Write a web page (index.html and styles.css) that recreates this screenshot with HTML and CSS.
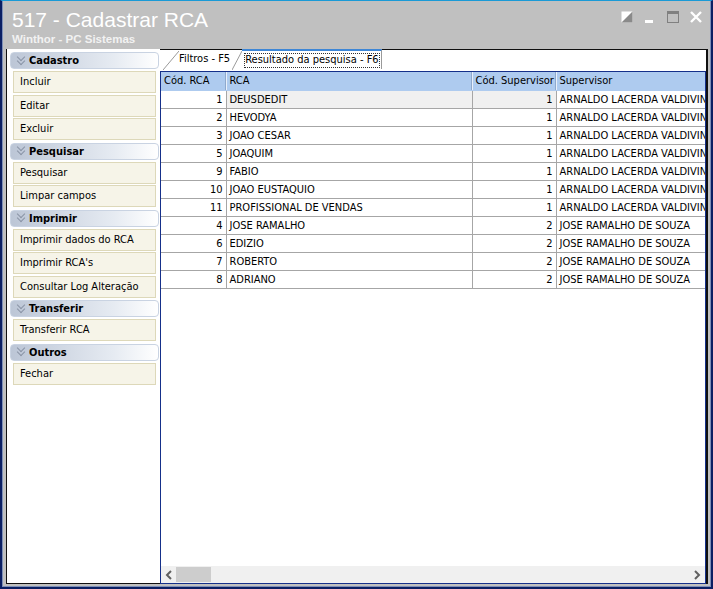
FILE: index.html
```html
<!DOCTYPE html>
<html lang="pt">
<head>
  <meta charset="UTF-8">
  <title>517 - Cadastrar RCA</title>
  <link rel="stylesheet" href="styles.css">
</head>
<body>
<div id="window">
  <div id="titlebar">
    <div class="titles">
      <div class="title">517 - Cadastrar RCA</div>
      <div class="subtitle">Winthor - PC Sistemas</div>
    </div>
    <div class="controls">
      <svg width="12" height="12" viewBox="0 0 12 12"><rect x="0.5" y="0.5" width="11" height="11" fill="#fff"/><polygon points="11.5,0.5 11.5,11.5 0.5,11.5" fill="#8a8a8a"/></svg>
      <svg width="12" height="12" viewBox="0 0 12 12"><rect x="1" y="9" width="8" height="3" fill="#fff"/></svg>
      <svg width="12" height="12" viewBox="0 0 12 12"><rect x="0.5" y="0.5" width="11" height="11" fill="none" stroke="#808080"/><rect x="0" y="0" width="12" height="3" fill="#808080"/></svg>
      <svg width="12" height="12" viewBox="0 0 12 12"><path d="M1 1 L11 11 M11 1 L1 11" stroke="#fff" stroke-width="2.4"/></svg>
    </div>
  </div>

  <div id="content">
    <ul id="menu">
      <li class="head"><span class="chev"></span>Cadastro</li>
      <li class="item">Incluir</li>
      <li class="item">Editar</li>
      <li class="item">Excluir</li>
      <li class="head"><span class="chev"></span>Pesquisar</li>
      <li class="item">Pesquisar</li>
      <li class="item">Limpar campos</li>
      <li class="head"><span class="chev"></span>Imprimir</li>
      <li class="item">Imprimir dados do RCA</li>
      <li class="item">Imprimir RCA's</li>
      <li class="item">Consultar Log Alteração</li>
      <li class="head"><span class="chev"></span>Transferir</li>
      <li class="item">Transferir RCA</li>
      <li class="head"><span class="chev"></span>Outros</li>
      <li class="item">Fechar</li>
    </ul>

    <div id="main">
      <div class="tabs">
        <svg class="slant" width="16" height="20" viewBox="0 0 16 20"><path d="M0 20 L16 1" stroke="#9a9a9a" fill="none"/></svg>
        <div class="tab">Filtros - F5</div>
        <svg class="slant" width="10" height="20" viewBox="0 0 10 20"><path d="M0 20 L10 1" stroke="#9a9a9a" fill="none"/></svg>
        <div class="tab active"><span class="focus">Resultado da pesquisa - F6</span></div>
      </div>

      <div class="grid">
        <div class="grid-body">
          <table>
            <colgroup>
              <col class="c1"><col class="c2"><col class="c3"><col class="c4">
            </colgroup>
            <thead>
              <tr><th>Cód. RCA</th><th>RCA</th><th>Cód. Supervisor</th><th>Supervisor</th></tr>
            </thead>
            <tbody>
              <tr class="sel"><td class="num">1</td><td>DEUSDEDIT</td><td class="num">1</td><td>ARNALDO LACERDA VALDIVINO</td></tr>
              <tr><td class="num">2</td><td>HEVODYA</td><td class="num">1</td><td>ARNALDO LACERDA VALDIVINO</td></tr>
              <tr><td class="num">3</td><td>JOAO CESAR</td><td class="num">1</td><td>ARNALDO LACERDA VALDIVINO</td></tr>
              <tr><td class="num">5</td><td>JOAQUIM</td><td class="num">1</td><td>ARNALDO LACERDA VALDIVINO</td></tr>
              <tr><td class="num">9</td><td>FABIO</td><td class="num">1</td><td>ARNALDO LACERDA VALDIVINO</td></tr>
              <tr><td class="num">10</td><td>JOAO EUSTAQUIO</td><td class="num">1</td><td>ARNALDO LACERDA VALDIVINO</td></tr>
              <tr><td class="num">11</td><td>PROFISSIONAL DE VENDAS</td><td class="num">1</td><td>ARNALDO LACERDA VALDIVINO</td></tr>
              <tr><td class="num">4</td><td>JOSE RAMALHO</td><td class="num">2</td><td>JOSE RAMALHO DE SOUZA</td></tr>
              <tr><td class="num">6</td><td>EDIZIO</td><td class="num">2</td><td>JOSE RAMALHO DE SOUZA</td></tr>
              <tr><td class="num">7</td><td>ROBERTO</td><td class="num">2</td><td>JOSE RAMALHO DE SOUZA</td></tr>
              <tr><td class="num">8</td><td>ADRIANO</td><td class="num">2</td><td>JOSE RAMALHO DE SOUZA</td></tr>
            </tbody>
          </table>
        </div>
        <div class="hscroll">
          <svg class="arrow" width="8" height="10" viewBox="0 0 8 10"><path d="M6 1 L2 5 L6 9" stroke="#606060" stroke-width="2" fill="none"/></svg>
          <div class="thumb"></div>
          <div class="track"></div>
          <svg class="arrow" width="8" height="10" viewBox="0 0 8 10"><path d="M2 1 L6 5 L2 9" stroke="#606060" stroke-width="2" fill="none"/></svg>
        </div>
      </div>
    </div>
  </div>
</div>
</body>
</html>
```

FILE: styles.css
```css
*{padding: 0; margin: 0; box-sizing: border-box;}
li{list-style: none;}
body{
  width: 713px;
  height: 589px;
  overflow: hidden;
  font-family: "DejaVu Sans Condensed", "DejaVu Sans", sans-serif;
  font-size: 11px;
  color: #000;
}
#window{
  display: flex;
  flex-direction: column;
  width: 713px;
  height: 589px;
  background: #c0c0c0;
  border: 2px solid #0b1f63;
  border-top: 1px solid #1a9ad6;
  box-shadow: inset 1px 0 0 #7d8fb8, inset -1px 0 0 #7d8fb8, inset 0 -1px 0 #7d8fb8;
  padding: 0 3px 3px 4px;
}
#titlebar{
  display: flex;
  justify-content: space-between;
  height: 48px;
  padding: 6px 0 0 6px;
}
.title{
  font-family: "Liberation Sans", Arial, sans-serif;
  font-size: 21px;
  line-height: 25px;
  color: #fff;
}
.subtitle{
  font-family: "Liberation Sans", Arial, sans-serif;
  font-size: 11.5px;
  font-weight: bold;
  line-height: 14px;
  color: #f2f2f2;
}
.controls{
  display: flex;
  gap: 11px;
  padding: 4px 6px 0 0;
}
#content{
  display: flex;
  flex: 1;
  min-height: 0;
}
#menu{
  display: flex;
  flex-direction: column;
  flex: 0 0 154px;
  background: #fff;
  border-left: 1px solid #101010;
  border-bottom: 1px solid #101010;
  padding: 2px 0 0 3px;
}
#menu .head{
  display: flex;
  align-items: center;
  flex: 0 0 17px;
  margin: 1px 1px 2px 0;
  padding-left: 5px;
  border: 1px solid #c9d3e2;
  border-radius: 4px;
  background: linear-gradient(to right, #bcc6d6, #e6ebf2 70%, #ffffff);
  font-size: 11px;
  font-weight: bold;
  color: #000;
}
#menu .chev{
  position: relative;
  width: 10px;
  height: 12px;
  margin-right: 3px;
}
#menu .chev::before,
#menu .chev::after{
  content: "";
  position: absolute;
  left: 2px;
  width: 5px;
  height: 5px;
  border-right: 1.5px solid #8a94a6;
  border-bottom: 1.5px solid #8a94a6;
  transform: rotate(45deg);
}
#menu .chev::before{top: -1px;}
#menu .chev::after{top: 3px;}
#menu .item{
  flex: 0 0 22px;
  line-height: 20px;
  margin: 0 4px 1.5px 3px;
  padding-left: 6px;
  background: #f6f4e8;
  border: 1px solid #ddd8b9;
  white-space: nowrap;
}
#main{
  display: flex;
  flex-direction: column;
  flex: 1;
  min-width: 0;
  background: #fff;
  border-top: 1px solid #101010;
  border-right: 2px solid #101010;
}
.tabs{
  display: flex;
  align-items: flex-end;
  height: 21px;
  padding-left: 3px;
  border-bottom: 1px solid #fff;
}
.slant{display: block;}
.tab{
  height: 20px;
  line-height: 18px;
  padding: 0 2px 0 0;
  white-space: nowrap;
  font-size: 11px;
}
.tab.active{
  padding: 2px 1px 0 2px;
  border-top: 2px solid #3d86d6;
  border-right: 1px solid #9a9a9a;
  margin-bottom: 1px;
}
.tab.active .focus{
  display: block;
  height: 15px;
  line-height: 13px;
  padding: 0 1px;
  outline: 1px dotted #303030;
  outline-offset: -1px;
}
.grid{
  display: flex;
  flex-direction: column;
  flex: 1;
  min-height: 0;
  border: 1px solid #15308a;
  overflow: hidden;
}
.grid-body{
  flex: 1;
  overflow: hidden;
}
table{
  table-layout: fixed;
  width: 590px;
  border-collapse: collapse;
}
.c1{width: 65px;}
.c2{width: 246px;}
.c3{width: 84px;}
.c4{width: 195px;}
th, td{
  height: 18px;
  padding: 0 3px;
  white-space: nowrap;
  overflow: hidden;
  text-align: left;
  font-weight: normal;
  line-height: 17px;
}
th{
  background: #aecbef;
  border-right: 1px solid #e8f0fb;
  border-bottom: 1px solid #aecbef;
  box-shadow: inset -1px 0 0 #8fa9cc;
}
td{
  border-right: 1px solid #a6a6a6;
  border-bottom: 1px solid #a6a6a6;
}
td.num{text-align: right;}
tr.sel td:nth-child(2),
tr.sel td:nth-child(3){
  background: #f0f0f0;
}
.hscroll{
  display: flex;
  align-items: center;
  height: 17px;
  background: #f0f0f0;
  padding: 0 4px;
}
.arrow{display: block;}
.thumb{
  width: 35px;
  height: 15px;
  margin-left: 3px;
  background: #cdcdcd;
}
.track{flex: 1;}
```
